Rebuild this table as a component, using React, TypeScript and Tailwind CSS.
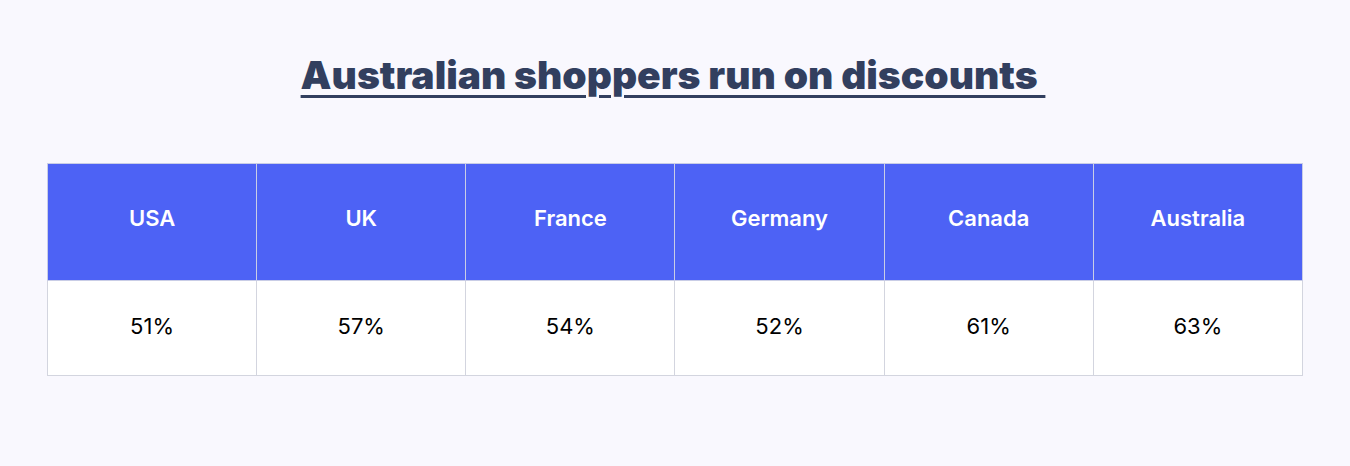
import React from "react";

const rows = [
  ["USA", "51%"],
  ["UK", "57%"],
  ["France", "54%"],
  ["Germany", "52%"],
  ["Canada", "61%"],
  ["Australia", "63%"],
];

export default function App() {
  return (
    <div className="w-[1350px] h-[466px] bg-[#f9f8fe] flex flex-col items-center pt-[50px] font-['Inter',sans-serif]">
      <h1 className="text-[39px] leading-[50px] font-black text-[#323f5f] underline decoration-[3px] underline-offset-[6px] ml-[-4px]">
        Australian shoppers run on discounts&nbsp;
      </h1>
      <table className="mt-[63px] w-[1256px] border-collapse table-fixed">
        <thead>
          <tr className="h-[117px] bg-[#4d62f5]">
            {rows.map(([c]) => (
              <th
                key={c}
                className="border border-[#c9cde6] text-white text-[22px] font-semibold pb-[7px]"
              >
                {c}
              </th>
            ))}
          </tr>
        </thead>
        <tbody>
          <tr className="h-[95px] bg-white">
            {rows.map(([c, v]) => (
              <td
                key={c}
                className="border border-[#d3d5df] text-center text-black text-[22px] font-normal pb-[3px]"
              >
                {v}
              </td>
            ))}
          </tr>
        </tbody>
      </table>
    </div>
  );
}
